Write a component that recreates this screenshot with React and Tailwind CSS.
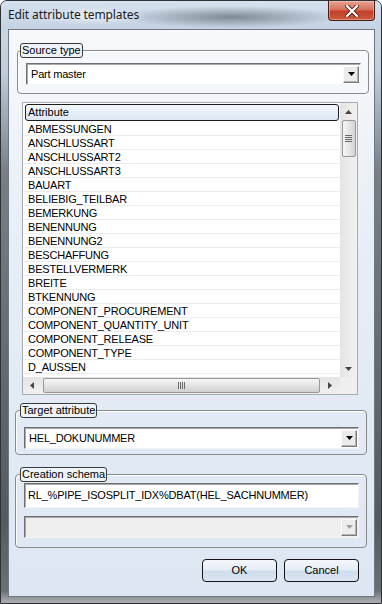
import React from "react";

const attributes = [
  "ABMESSUNGEN",
  "ANSCHLUSSART",
  "ANSCHLUSSART2",
  "ANSCHLUSSART3",
  "BAUART",
  "BELIEBIG_TEILBAR",
  "BEMERKUNG",
  "BENENNUNG",
  "BENENNUNG2",
  "BESCHAFFUNG",
  "BESTELLVERMERK",
  "BREITE",
  "BTKENNUNG",
  "COMPONENT_PROCUREMENT",
  "COMPONENT_QUANTITY_UNIT",
  "COMPONENT_RELEASE",
  "COMPONENT_TYPE",
  "D_AUSSEN",
];

/* small arrow glyphs */
function Tri({ dir = "down", color = "#000", w = 7, h = 4 }) {
  const d = {
    down: `M0 0 L${w} 0 L${w / 2} ${h} Z`,
    up: `M0 ${h} L${w} ${h} L${w / 2} 0 Z`,
  };
  if (dir === "left" || dir === "right") {
    return (
      <svg width={h} height={w} viewBox={`0 0 ${h} ${w}`}>
        <path
          d={dir === "left" ? `M${h} 0 L${h} ${w} L0 ${w / 2} Z` : `M0 0 L0 ${w} L${h} ${w / 2} Z`}
          fill={color}
        />
      </svg>
    );
  }
  return (
    <svg width={w} height={h} viewBox={`0 0 ${w} ${h}`}>
      <path d={d[dir]} fill={color} />
    </svg>
  );
}

function Combo({ value, disabled, className = "" }) {
  return (
    <div
      className={`h-[22px] flex items-center border border-t-[#6f6f6f] border-l-[#6f6f6f] border-r-[#f4f4f4] border-b-[#f4f4f4] shadow-[inset_1px_1px_0_#a9a9a9] ${
        disabled ? "bg-[#efefef]" : "bg-white"
      } ${className}`}
    >
      <div className="flex-1 pl-[4px] text-[11px] tracking-[-0.2px] text-black leading-none">
        {value}
      </div>
      <div
        className={`w-[16px] h-[17px] mr-[1px] flex items-center justify-center border border-t-[#fafafa] border-l-[#fafafa] border-r-[#7a7a7a] border-b-[#7a7a7a] shadow-[inset_-1px_-1px_0_#b4b4b4] ${
          disabled ? "bg-[#ececec]" : "bg-[#ebebeb]"
        }`}
      >
        <Tri dir="down" color={disabled ? "#a0a0a0" : "#000"} />
      </div>
    </div>
  );
}

function Legend({ children }) {
  return (
    <legend className="border border-[#3a3a3a] rounded-[3px] px-[1px] h-[15px] leading-[13px] text-[11px] text-black bg-[#eef3f9]">
      {children}
    </legend>
  );
}

export default function App() {
  return (
    <div className="w-[382px] h-[604px] flex flex-col rounded-t-[7px] border border-[#2e3236] overflow-hidden font-['Liberation_Sans',Arial,sans-serif] bg-[linear-gradient(to_bottom,#cfdbe8_0px,#bfcddc_70px,#7a7f86_170px,#56595e_520px,#6c6f73_590px,#a5a8ab_600px)]">
      {/* ================= TITLE BAR ================= */}
      <div className="h-[28px] flex items-start bg-[radial-gradient(ellipse_110px_11px_at_230px_16px,rgba(66,72,82,0.55),transparent),radial-gradient(ellipse_60px_9px_at_90px_15px,rgba(255,255,255,0.55),transparent),linear-gradient(to_bottom,#d6e1ee,#c4d2e2)]">
        <div className="pl-[7px] pt-[6px] text-[12px] leading-[16px] text-[#1b1b1b] font-['Noto_Sans',sans-serif] tracking-[-0.1px]">
          Edit attribute templates
        </div>
        <div className="ml-auto mr-[6px] w-[47px] h-[20px] rounded-b-[4px] border border-t-0 border-[#4a1a12] bg-[linear-gradient(to_bottom,#e6a292_0%,#d6715e_45%,#c2402a_55%,#cd5a3d_100%)] shadow-[inset_0_0_0_1px_rgba(255,220,210,0.45)] flex items-center justify-center">
          <svg width="14" height="12" viewBox="0 0 14 12">
            <path
              d="M2 1 L12 11 M12 1 L2 11"
              stroke="#5a1f14"
              strokeWidth="4"
              strokeLinecap="square"
            />
            <path
              d="M2 1 L12 11 M12 1 L2 11"
              stroke="#ffffff"
              strokeWidth="2.2"
              strokeLinecap="square"
            />
          </svg>
        </div>
      </div>

      {/* ================= CLIENT ================= */}
      <div className="ml-[7px] mr-[6px] mb-[6px] flex-1 flex flex-col border border-[#6d7886] bg-[linear-gradient(to_bottom,#f7f9fc,#e6edf6_40%,#dde7f3)]">
        {/* SOURCE TYPE */}
        <fieldset className="mt-[13px] ml-[8px] w-[352px] border border-[#8a8a8a] rounded-[4px] pl-[2px] pb-[8px] shadow-[inset_1px_1px_0_#ffffff]">
          <Legend>Source type</Legend>
          <Combo value="Part master" className="mt-[5px] ml-[6px] w-[335px]" />
        </fieldset>

        {/* ATTRIBUTE LIST */}
        <div className="mt-[8px] ml-[13px] w-[336px] h-[293px] border border-[#a7abb0] bg-white grid grid-cols-[1fr_17px] grid-rows-[1fr_17px]">
          <div className="flex flex-col overflow-hidden">
            <div className="h-[19px] pt-[1px] pl-[2px] pr-[1px]">
              <div className="h-[17px] rounded-[3px] border border-[#1c1c1c] bg-[linear-gradient(to_bottom,#f3f7fc,#dce7f4)] pl-[2px] text-[11px] leading-[15px] text-black">
                Attribute
              </div>
            </div>
            {attributes.map((a) => (
              <div
                key={a}
                className="h-[14px] shrink-0 border-b border-[#ececec] pl-[5px] text-[11px] leading-[14px] tracking-[-0.2px] text-black whitespace-nowrap"
              >
                {a}
              </div>
            ))}
          </div>

          {/* vertical scrollbar */}
          <div className="flex flex-col items-center bg-[linear-gradient(to_right,#e4e4e4,#f1f1f1)]">
            <div className="h-[17px] w-full flex items-center justify-center">
              <Tri dir="up" color="#454545" />
            </div>
            <div className="w-[14px] h-[37px] rounded-[2px] border border-[#979797] bg-[linear-gradient(to_right,#f6f6f6,#e4e4e4_50%,#d4d4d4)] flex flex-col items-center justify-center gap-[1px]">
              <div className="w-[7px] h-px bg-[#6a6a6a]" />
              <div className="w-[7px] h-px bg-[#6a6a6a]" />
              <div className="w-[7px] h-px bg-[#6a6a6a]" />
              <div className="w-[7px] h-px bg-[#6a6a6a]" />
            </div>
            <div className="flex-1" />
            <div className="h-[17px] w-full flex items-center justify-center">
              <Tri dir="down" color="#454545" />
            </div>
          </div>

          {/* horizontal scrollbar */}
          <div className="flex items-center bg-[linear-gradient(to_bottom,#e4e4e4,#f1f1f1)]">
            <div className="w-[17px] h-full flex items-center justify-center">
              <Tri dir="left" color="#454545" />
            </div>
            <div className="ml-[3px] w-[277px] h-[15px] rounded-[2px] border border-[#979797] bg-[linear-gradient(to_bottom,#f6f6f6,#e4e4e4_50%,#d0d0d0)] flex items-center justify-center gap-[1px]">
              <div className="w-px h-[7px] bg-[#6a6a6a]" />
              <div className="w-px h-[7px] bg-[#6a6a6a]" />
              <div className="w-px h-[7px] bg-[#6a6a6a]" />
              <div className="w-px h-[7px] bg-[#6a6a6a]" />
            </div>
            <div className="flex-1 h-full flex items-center justify-center">
              <Tri dir="right" color="#454545" />
            </div>
          </div>
          <div className="bg-[#efefef]" />
        </div>

        {/* TARGET ATTRIBUTE */}
        <fieldset className="mt-[8px] ml-[6px] w-[352px] border border-[#8a8a8a] rounded-[4px] pl-[4px] pb-[5px] shadow-[inset_1px_1px_0_#ffffff]">
          <Legend>Target attribute</Legend>
          <Combo value="HEL_DOKUNUMMER" className="mt-[9px] ml-[4px] w-[335px]" />
        </fieldset>

        {/* CREATION SCHEMA */}
        <fieldset className="mt-[12px] ml-[6px] w-[352px] border border-[#8a8a8a] rounded-[4px] pl-[4px] pb-[9px] shadow-[inset_1px_1px_0_#ffffff]">
          <Legend>Creation schema</Legend>
          <div className="mt-[1px] ml-[4px] w-[335px] h-[25px] flex items-center border border-t-[#6f6f6f] border-l-[#6f6f6f] border-r-[#f4f4f4] border-b-[#f4f4f4] shadow-[inset_1px_1px_0_#a9a9a9] bg-white pl-[3px] text-[11px] tracking-[-0.2px] text-black">
            RL_%PIPE_ISOSPLIT_IDX%DBAT(HEL_SACHNUMMER)
          </div>
          <Combo value="" disabled className="mt-[8px] ml-[4px] w-[335px]" />
        </fieldset>

        {/* ================= BUTTONS ================= */}
        <div className="mt-[11px] mr-[15px] flex justify-end gap-[7px]">
          <button className="w-[75px] h-[23px] rounded-[4px] border border-[#141414] bg-[linear-gradient(to_bottom,#f4f7fb,#e5edf6_45%,#cfdeef_55%,#dbe6f3)] text-[11px] text-black">
            OK
          </button>
          <button className="w-[75px] h-[23px] rounded-[4px] border border-[#141414] bg-[linear-gradient(to_bottom,#f4f7fb,#e5edf6_45%,#cfdeef_55%,#dbe6f3)] text-[11px] text-black">
            Cancel
          </button>
        </div>
      </div>
    </div>
  );
}
